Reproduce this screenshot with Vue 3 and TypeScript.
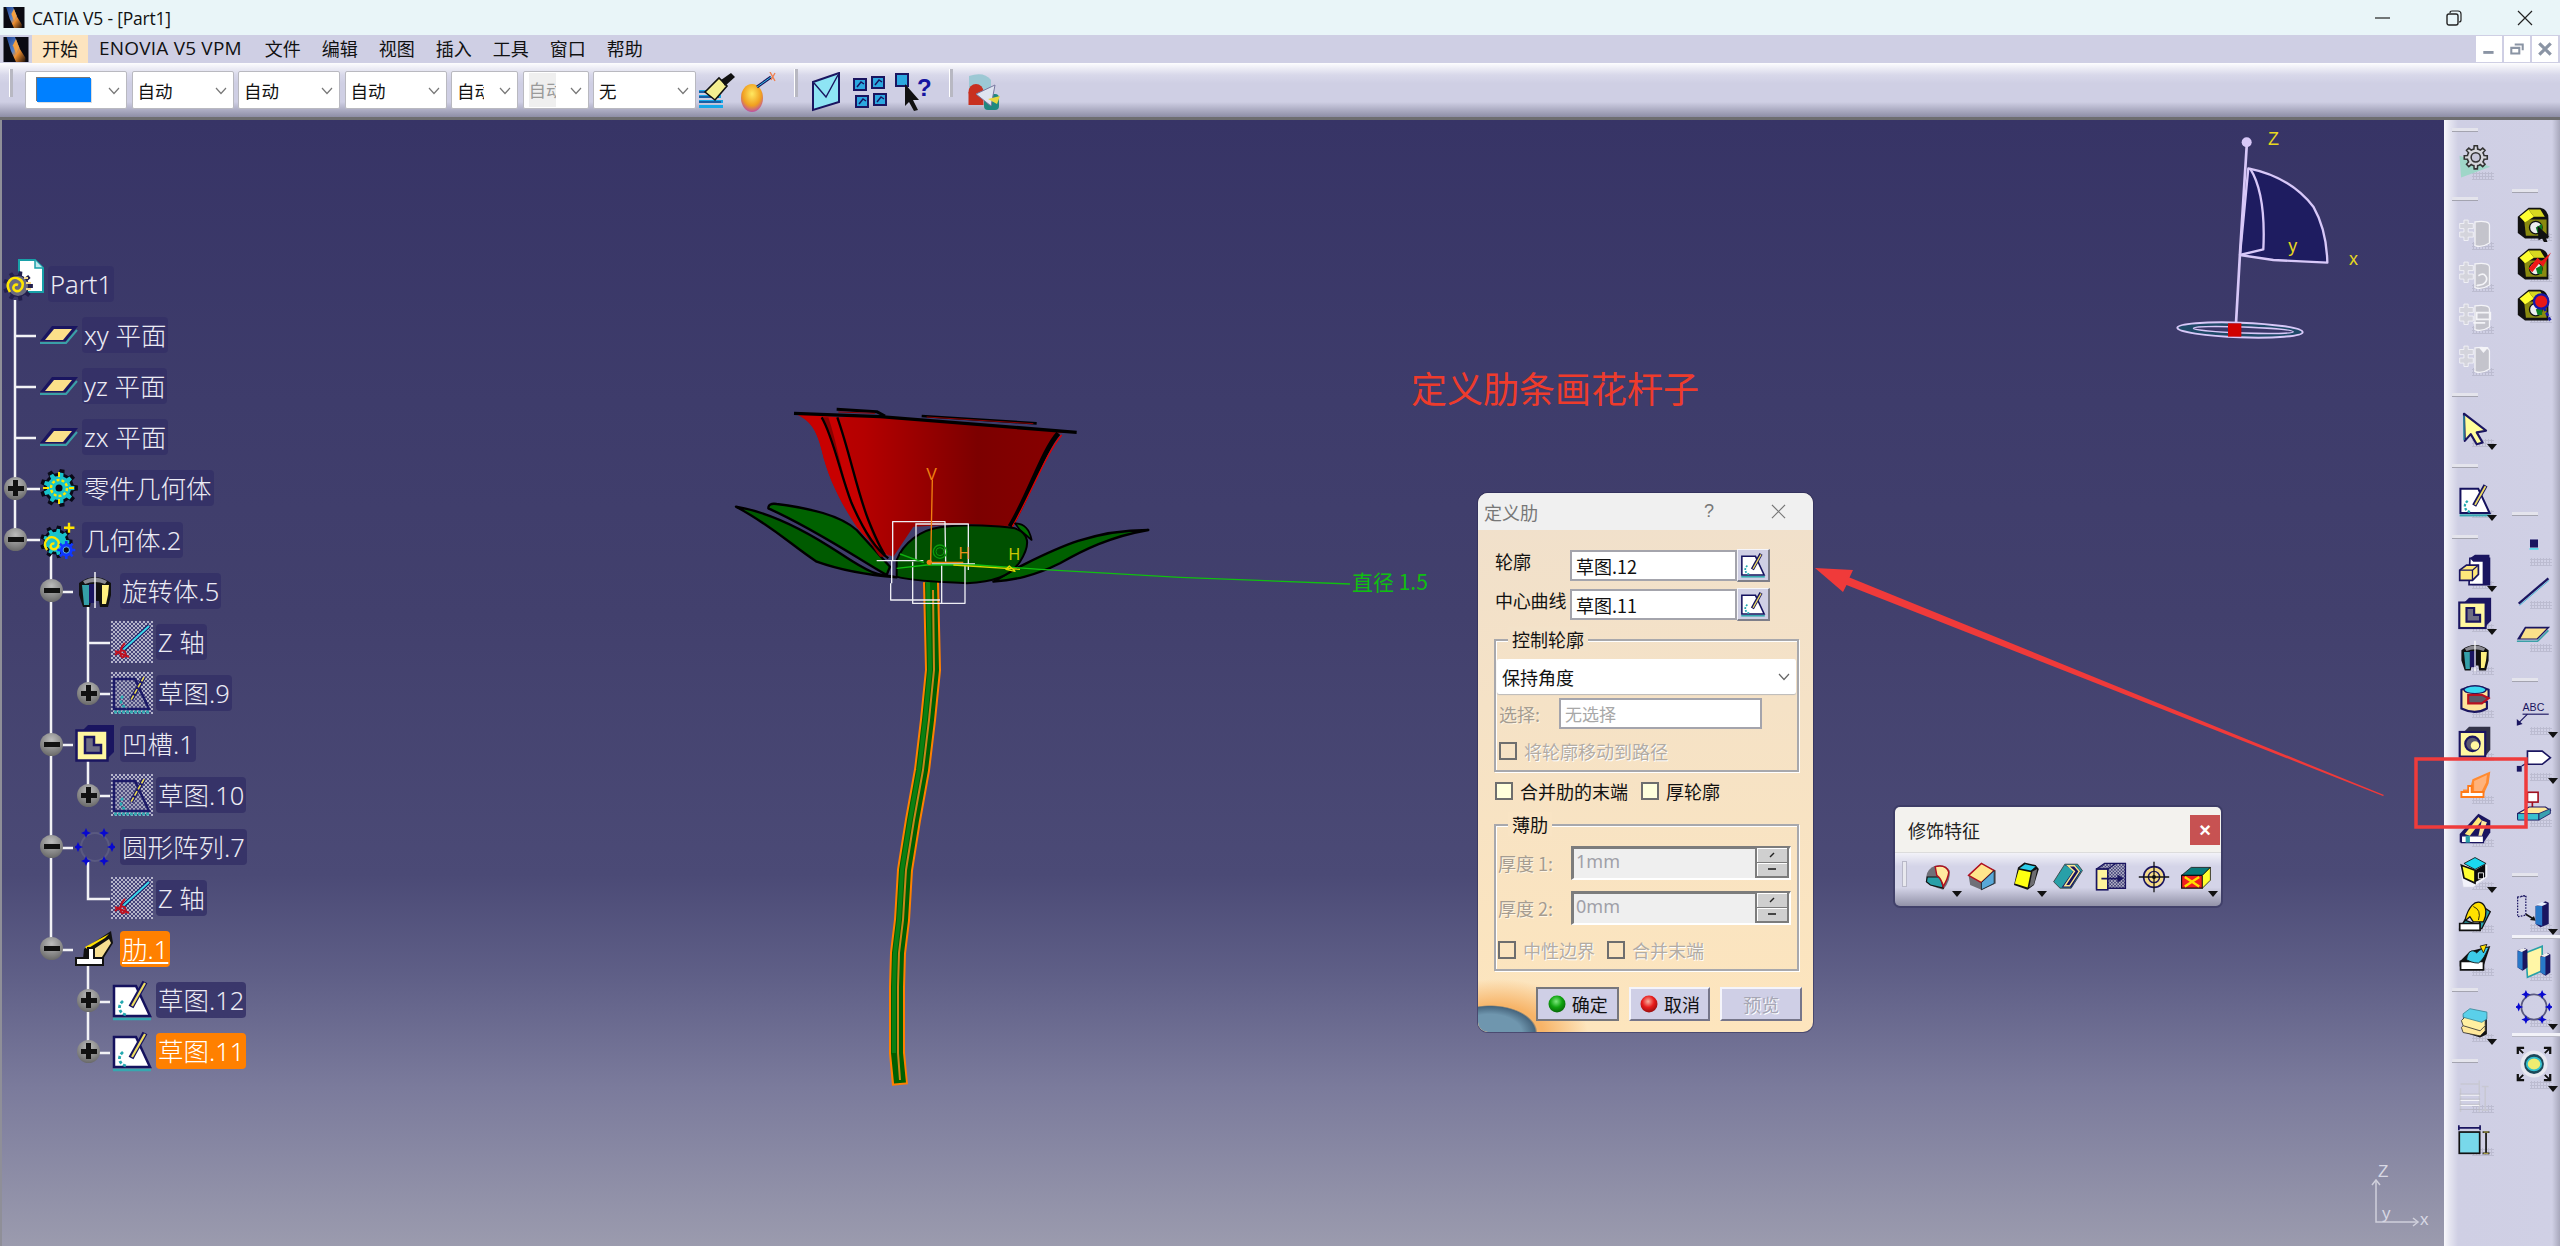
<script setup lang="ts">
interface TreeNode { lv: number; icon: string; label: string; exp?: string; sel?: boolean }
interface Tool { icon: string; more?: boolean }
interface Group { mt: number; pitch: number; handle?: string; tools: Tool[] }

const menus = ['开始', 'ENOVIA V5 VPM', '文件', '编辑', '视图', '插入', '工具', '窗口', '帮助']

const combos = [
  { w: 102, color: true },
  { w: 102, text: '自动' },
  { w: 102, text: '自动' },
  { w: 102, text: '自动' },
  { w: 67, text: '自动', clip: true },
  { w: 66, text: '自动', clip: true, off: true },
  { w: 103, text: '无' }
]

const tree: TreeNode[] = [
  { lv: -1, icon: 'part', label: 'Part1' },
  { lv: 0, icon: 'plane', label: 'xy 平面' },
  { lv: 0, icon: 'plane', label: 'yz 平面' },
  { lv: 0, icon: 'plane', label: 'zx 平面' },
  { lv: 0, icon: 'body', label: '零件几何体', exp: 'plus' },
  { lv: 0, icon: 'geom', label: '几何体.2', exp: 'minus' },
  { lv: 1, icon: 'shaft', label: '旋转体.5', exp: 'minus' },
  { lv: 2, icon: 'zaxis', label: 'Z 轴' },
  { lv: 2, icon: 'skdot', label: '草图.9', exp: 'plus' },
  { lv: 1, icon: 'pocket', label: '凹槽.1', exp: 'minus' },
  { lv: 2, icon: 'skdot', label: '草图.10', exp: 'plus' },
  { lv: 1, icon: 'circ', label: '圆形阵列.7', exp: 'minus' },
  { lv: 2, icon: 'zaxis', label: 'Z 轴' },
  { lv: 1, icon: 'rib', label: '肋.1', exp: 'minus', sel: true },
  { lv: 2, icon: 'sketch', label: '草图.12', exp: 'plus' },
  { lv: 2, icon: 'sketch', label: '草图.11', exp: 'plus', sel: true }
]

const leftGroups: Group[] = [
  { mt: 0, pitch: 43, handle: 'first', tools: [{ icon: 'cfg' }] },
  { mt: 4, pitch: 42, tools: [{ icon: 'db1' }, { icon: 'db2' }, { icon: 'db3' }, { icon: 'db4' }] },
  { mt: 4, pitch: 43, tools: [{ icon: 'arrow', more: true }] },
  { mt: 4, pitch: 43, tools: [{ icon: 'sketch', more: true }] },
  {
    mt: 4,
    pitch: 43,
    tools: [
      { icon: 'pad', more: true },
      { icon: 'pocket', more: true },
      { icon: 'shaft' },
      { icon: 'groove' },
      { icon: 'hole' },
      { icon: 'ribo' },
      { icon: 'slot' },
      { icon: 'solid', more: true },
      { icon: 'loft' },
      { icon: 'rloft' }
    ]
  },
  { mt: -1, pitch: 43, tools: [{ icon: 'thick', more: true }] },
  { mt: 4, pitch: 43, tools: [{ icon: 'dimg' }, { icon: 'dim' }] }
]

const rightGroups: Group[] = [
  { mt: 59, pitch: 41, tools: [{ icon: 'ol1' }, { icon: 'ol2' }, { icon: 'ol3' }] },
  { mt: 176, pitch: 43, tools: [{ icon: 'point' }, { icon: 'line' }, { icon: 'planet' }] },
  { mt: 13, pitch: 46, tools: [{ icon: 'abc', more: true }, { icon: 'flag', more: true }, { icon: 'stamp' }] },
  { mt: 33, pitch: 48, tools: [{ icon: 'move', more: true }] },
  { mt: 0, pitch: 46, handle: 'rule', tools: [{ icon: 'mirror' }, { icon: 'circ', more: true }] },
  { mt: 3, pitch: 56, handle: 'rule', tools: [{ icon: 'fit', more: true }] }
]

const dressUp: Tool[] = [
  { icon: 'f1', more: true },
  { icon: 'f2' },
  { icon: 'f3', more: true },
  { icon: 'f4' },
  { icon: 'f5' },
  { icon: 'f6' },
  { icon: 'f7', more: true }
]

// toothed wheel used by the body and settings icons
function gear(cx: number, cy: number, r1: number, r2: number, n: number): string {
  const pts: string[] = []
  const step = (Math.PI * 2) / n
  for (let i = 0; i < n; i++) {
    const a = i * step
    const corners: [number, number][] = [
      [r2, a - step * 0.5],
      [r2, a - step * 0.28],
      [r1, a - step * 0.18],
      [r1, a + step * 0.18],
      [r2, a + step * 0.28]
    ]
    for (const [r, t] of corners) {
      pts.push(`${(cx + r * Math.cos(t)).toFixed(1)} ${(cy + r * Math.sin(t)).toFixed(1)}`)
    }
  }
  return 'M' + pts.join('L') + 'Z'
}
</script>

<template>
  <div class="app">
    <svg class="sprite" aria-hidden="true">
      <defs>
        <pattern id="dots" width="4" height="4" patternUnits="userSpaceOnUse">
          <rect width="4" height="4" fill="#46447a" />
          <rect width="2" height="2" fill="#b4b4c8" />
          <rect x="2" y="2" width="2" height="2" fill="#b4b4c8" />
        </pattern>
        <pattern id="hatch" width="2" height="2" patternUnits="userSpaceOnUse">
          <rect width="2" height="2" fill="#1c1a5c" />
          <rect width="1" height="1" fill="#23216a" />
        </pattern>
        <linearGradient id="redPetal" x1="0" x2="1" y1="0" y2="0">
          <stop offset="0" stop-color="#c40000" />
          <stop offset=".25" stop-color="#b40000" />
          <stop offset=".65" stop-color="#7c0000" />
          <stop offset="1" stop-color="#8a0000" />
        </linearGradient>
        <radialGradient id="ballG" cx=".45" cy=".35" r=".7">
          <stop offset="0" stop-color="#7de87d" />
          <stop offset=".5" stop-color="#0fa30f" />
          <stop offset="1" stop-color="#075c07" />
        </radialGradient>
        <radialGradient id="ballR" cx=".45" cy=".35" r=".7">
          <stop offset="0" stop-color="#f7b0a0" />
          <stop offset=".5" stop-color="#e81c1c" />
          <stop offset="1" stop-color="#8c0c0c" />
        </radialGradient>
        <radialGradient id="ballY" cx=".5" cy=".35" r=".7">
          <stop offset="0" stop-color="#ffe860" />
          <stop offset=".6" stop-color="#f0a020" />
          <stop offset="1" stop-color="#b040c0" />
        </radialGradient>
        <linearGradient id="logoG" x1="0" x2="1" y1="0" y2="1">
          <stop offset="0" stop-color="#1a3f90" />
          <stop offset=".45" stop-color="#5c86c8" />
          <stop offset=".62" stop-color="#f09030" />
          <stop offset="1" stop-color="#201008" />
        </linearGradient>
      </defs>

      <symbol id="logo" viewBox="0 0 24 24">
        <rect width="24" height="24" fill="#0a0a12" />
        <path d="M3 0h8l5 12 5 8v4h-9L7 13z" fill="url(#logoG)" />
        <path d="M12 2l3 8-3 6-3-8z" fill="#f4a040" />
      </symbol>

      <symbol id="plane" viewBox="0 0 40 40">
        <path d="M13 11H39L27 26H1z" fill="#1a1560" />
        <path d="M15 14H33L24 25H6z" fill="#fbe08a" />
        <path d="M1 28H27L38 15" fill="none" stroke="#3aa0a8" stroke-width="2" />
      </symbol>

      <symbol id="part" viewBox="0 0 44 44">
        <path d="M17 1H33L41 9V33H17z" fill="#fff" stroke="#18a0a8" stroke-width="2" />
        <path d="M33 1V9H41" fill="#bfe8ec" stroke="#18a0a8" stroke-width="1.500" />
        <path :d="gear(16, 27, 15, 11, 9)" fill="#23204e" />
        <circle cx="16" cy="27" r="10" fill="#6a6a80" />
        <path d="M8 33C2 24 10 16 17 20 24 24 20 33 14 32 9 30 12 24 16 26" fill="none" stroke="#ffe600" stroke-width="2.600" />
        <path d="M22 19h4M24 24h5M24 30h5" stroke="#f7d98a" stroke-width="2" />
      </symbol>

      <symbol id="body" viewBox="0 0 40 40">
        <path :d="gear(20, 20, 19, 15, 9)" fill="#0a0a18" />
        <path :d="gear(20, 20, 15.500, 12, 9)" fill="#18c4cc" />
        <circle cx="20" cy="20" r="8" fill="none" stroke="#ffe600" stroke-width="2.500" stroke-dasharray="3 2" />
        <circle cx="20" cy="20" r="3.500" fill="#0a0a18" />
        <path d="M4 20h6M30 20h5M20 4v5M20 31v5" stroke="#ffe600" stroke-width="2" />
      </symbol>

      <symbol id="geom" viewBox="0 0 44 44">
        <path :d="gear(19, 24, 18, 14, 9)" fill="#0a0a18" />
        <path :d="gear(19, 24, 14.500, 11, 9)" fill="#18c4cc" />
        <path d="M9 33C3 25 10 16 18 20 25 24 21 33 15 32 11 30 13 25 17 26" fill="none" stroke="#ffe600" stroke-width="2.600" />
        <path d="M33 3v11M27.500 8.500H39" stroke="#ffe600" stroke-width="2.600" />
        <path :d="gear(30, 33, 10, 7, 8)" fill="#1038ff" />
        <circle cx="30" cy="33" r="3.500" fill="#0a0a18" stroke="#60c0ff" />
      </symbol>

      <symbol id="shaft" viewBox="0 0 40 40">
        <path d="M4 12Q20 0 36 12L36 24 33 36H25L24 30H16L15 36H8L4 24z" fill="#111" />
        <path d="M8 10Q20 3 32 10L30 13Q20 9 10 13z" fill="#8a8a92" />
        <path d="M7 14H14V34H9z" fill="#35a0a8" />
        <path d="M14 13H21V32H14z" fill="#1a1560" />
        <path d="M27 14H34L33 24 31 33H27z" fill="#fff080" />
        <path d="M20 1V37" stroke="#fff" stroke-width="1.400" fill="none" />
      </symbol>

      <symbol id="zaxis" viewBox="0 0 42 42">
        <rect width="42" height="42" fill="url(#dots)" />
        <path d="M38 5L12 29" stroke="#1a1560" stroke-width="4" />
        <path d="M38 5L12 29" stroke="#3cd8ea" stroke-width="2" />
        <path d="M4 34C12 26 16 30 14 35 10 40 6 30 14 22M4 30L18 36" fill="none" stroke="#c01020" stroke-width="2" />
      </symbol>

      <symbol id="skdot" viewBox="0 0 42 42">
        <rect width="42" height="42" fill="url(#dots)" />
        <path d="M3 7H24L38 37H3z" fill="#6e6e98" fill-opacity=".25" stroke="#1c1a68" stroke-width="2.500" />
        <path d="M12 24C8 28 10 34 16 36" fill="none" stroke="#23a8b0" stroke-width="2.500" stroke-dasharray="3 2" />
        <path d="M33 5L20 28" stroke="#1c1a68" stroke-width="4" />
        <path d="M33 5L20 28" stroke="#e8d850" stroke-width="1.600" stroke-dasharray="5 2" />
        <path d="M3 40H38" stroke="#36a8b0" stroke-width="3" stroke-dasharray="3 1" />
      </symbol>

      <symbol id="sketch" viewBox="0 0 42 42">
        <path d="M3 7H25L39 37H3z" fill="#fff" stroke="#15125e" stroke-width="2.500" />
        <path d="M12 22C6 27 8 34 15 36" fill="none" stroke="#23a8b0" stroke-width="2.800" stroke-dasharray="3 2" />
        <path d="M34 3L20 28" stroke="#15125e" stroke-width="5.500" />
        <path d="M34 4L21 27" stroke="#eedc60" stroke-width="2.200" />
        <path d="M2 40H40" stroke="#36a8b0" stroke-width="2.600" />
      </symbol>

      <symbol id="pocket" viewBox="0 0 40 40">
        <path d="M8 6L13 1H39V28L33 34z" fill="#1a1560" />
        <rect x="1.500" y="6.500" width="31" height="30" fill="#fff7a0" stroke="#1a1560" stroke-width="2.500" />
        <path d="M10 13H19V21H26V29H10z" fill="#6e6e84" stroke="#1a1560" stroke-width="2.500" />
      </symbol>

      <symbol id="circ" viewBox="0 0 40 40">
        <g fill="none" stroke="#5a5a80" stroke-width="2"><circle cx="20" cy="20" r="14" /></g>
        <g fill="#0808d0">
          <path v-for="(c, i) in [[11, 6], [29, 6], [37, 20], [29, 34], [11, 34], [3, 20]]" :key="i" :d="`M${c[0]} ${c[1] - 5}l1.500 3.500 3.500 1.500-3.500 1.500-1.500 3.500-1.500-3.500-3.500-1.500 3.500-1.500z`" />
        </g>
      </symbol>

      <symbol id="rib" viewBox="0 0 40 40">
        <path d="M9 20L36 2 38 14 28 30H8z" fill="#111" />
        <path d="M10 18L34 5 30 9 12 20z" fill="#ffe000" />
        <path d="M16 22L34 10 36 14 27 28H18z" fill="#f8df90" />
        <path d="M13 19H19V29H28V36H1V29H13z" fill="#fff" stroke="#111" stroke-width="2" />
      </symbol>

      <symbol id="ribo" viewBox="0 0 40 40">
        <path d="M17 12L38 3 36 17 30 30H6V24H14z" fill="#ff8a30" />
        <path d="M19 14L34 7 33 16 28 26H19z" fill="#ffb27a" />
        <path d="M16 20V27H30V33H4V27H12V20z" fill="#fff" stroke="#ff7a18" stroke-width="2.200" />
      </symbol>

      <symbol id="cfg" viewBox="0 0 44 44">
        <path d="M2 14L42 28 4 42z" fill="#9fd6c8" />
        <path :d="gear(23, 16, 15, 11, 8)" fill="#d6d6dc" stroke="#333" stroke-width="2" />
        <circle cx="23" cy="16" r="6" fill="#c6c6d8" stroke="#333" stroke-width="2" />
      </symbol>

      <g id="dbbase">
        <path d="M20 8Q37 6 37 12V33Q28 39 20 36z" fill="#c4c4cc" stroke="#f4f4f8" stroke-width="1.500" />
        <path d="M2 10h5V6h5v4h6v6h-6v4h6v6h-6v4h-5v-4H2v-6h5v-4H2z" fill="#d4d4dc" stroke="#f4f4f8" />
      </g>
      <symbol id="db1" viewBox="0 0 40 40"><use href="#dbbase" /></symbol>
      <symbol id="db2" viewBox="0 0 40 40"><use href="#dbbase" /><path d="M24 22c8-5 12 3 8 8s-8 2-10 4" fill="none" stroke="#f4f4f8" stroke-width="2" /></symbol>
      <symbol id="db3" viewBox="0 0 40 40"><use href="#dbbase" /><path d="M22 16h16v8H22zM18 28h14" fill="none" stroke="#f4f4f8" stroke-width="2" /></symbol>
      <symbol id="db4" viewBox="0 0 40 40"><use href="#dbbase" /><path d="M24 7h12l-6 7z" fill="#f4f4f8" /></symbol>

      <symbol id="arrow" viewBox="0 0 40 40">
        <path d="M7 2L33 22 22 24 29 36 22 38 15 26 8 34z" fill="#ffff9a" stroke="#1a1560" stroke-width="2.500" stroke-linejoin="round" />
        <path d="M7 4V33" stroke="#38a8b0" stroke-width="1.500" />
      </symbol>

      <symbol id="pad" viewBox="0 0 40 40">
        <path d="M14 5H37V36H13z" fill="#fff" stroke="#1a1560" stroke-width="2" />
        <path d="M14 5L20 1H37V36L29 36V9H18z" fill="#1a1560" />
        <path d="M2 19L10 13H24V24L17 31H2z" fill="#ffe97a" stroke="#1a1560" stroke-width="2" />
        <path d="M2 19H17V31M17 19L24 13" fill="none" stroke="#1a1560" stroke-width="1.500" />
      </symbol>

      <symbol id="groove" viewBox="0 0 40 40">
        <path d="M4 8Q20 0 36 8V17H26L22 22H34V30Q20 38 4 30z" fill="#ffe49a" stroke="#1a1560" stroke-width="2.500" />
        <ellipse cx="20" cy="8" rx="13" ry="4.500" fill="#3ad8f0" stroke="#1a1560" stroke-width="1.500" />
        <path d="M12 14H28L36 18 28 24H12z" fill="#5a5a68" stroke="#b81020" stroke-width="2.500" />
      </symbol>

      <symbol id="hole" viewBox="0 0 40 40">
        <path d="M8 6L13 1H38V28L32 36H4z" fill="#333348" />
        <rect x="2" y="7" width="30" height="29" fill="#fff7a0" stroke="#1a1560" stroke-width="2.500" />
        <circle cx="17" cy="21" r="8.500" fill="#5a5a70" stroke="#1a1560" stroke-width="2.500" />
        <circle cx="20" cy="23" r="5" fill="#fff7a0" />
      </symbol>

      <symbol id="slot" viewBox="0 0 40 40">
        <path d="M2 26L24 2 38 10V24L30 36H2z" fill="#1a1560" />
        <path d="M4 28H30V36H4z" fill="#fff" stroke="#1a1560" stroke-width="1.500" />
        <path d="M8 26L24 6 28 10 14 28z" fill="#ffe97a" />
        <path d="M28 10L34 12 28 28H24z" fill="#f8e8a0" />
        <path d="M9 28H14V36H9z" fill="#28a0a8" />
      </symbol>

      <symbol id="solid" viewBox="0 0 40 40">
        <path d="M2 14L20 3 35 12V26L18 38H6z" fill="#f2f2fa" stroke="#d0d0e0" />
        <path d="M20 3L33 10 20 17 7 10z" fill="#1ad8f0" stroke="#111" />
        <path d="M4 12L20 18V33L7 27z" fill="#ffff30" stroke="#111" stroke-width="2" />
        <path d="M20 18L32 11V26L20 32z" fill="#0a0a0a" />
        <path d="M24 21h6v7h-6z" fill="none" stroke="#fff" />
      </symbol>

      <symbol id="loft" viewBox="0 0 40 40">
        <path d="M2 36H28L38 16 32 12 24 32 8 26z" fill="#28a0a8" stroke="#111" stroke-width="1.500" />
        <path d="M2 38V30H26V38z" fill="#fff" stroke="#111" stroke-width="2" />
        <path d="M8 27C12 10 20 2 28 6 34 10 34 20 30 28L18 28 14 22z" fill="#ffe000" stroke="#111" stroke-width="1.500" />
        <path d="M18 10Q28 14 24 26" fill="none" stroke="#111" />
      </symbol>

      <symbol id="rloft" viewBox="0 0 40 40">
        <path d="M2 24L14 12 38 6 30 30H2z" fill="#111" />
        <path d="M3 34V24H30V34z" fill="#fff" stroke="#111" stroke-width="2" />
        <path d="M10 22C12 10 18 10 22 14 26 10 32 6 36 8 32 16 30 22 24 26 18 26 14 24 10 22z" fill="#3ccbe8" stroke="#111" />
        <path d="M26 6L34 4 30 14z" fill="#ffe000" stroke="#111" />
      </symbol>

      <symbol id="thick" viewBox="0 0 40 40">
        <path d="M6 10L14 4 30 6 34 12V32L26 36 8 30z" fill="#111" />
        <path d="M4 24L10 18 28 24 32 20V28L26 34 6 30z" fill="#ffe89a" stroke="#333" />
        <path d="M4 16L10 10 28 16 32 12V22L26 28 6 22z" fill="#fff0a0" stroke="#333" />
        <path d="M6 8L14 2 34 6V14L28 18 6 12z" fill="#5ad0ea" stroke="#3a8898" />
      </symbol>

      <symbol id="dimg" viewBox="0 0 40 40">
        <path d="M3 12V40M25 3V40M3 7H25M32 10V38M28 10H36M28 38H36" fill="none" stroke="#c8c8d2" stroke-width="1.800" />
        <path d="M3 20H25M3 26H25M3 32H25" stroke="#f4f4f8" stroke-width="2" />
        <path d="M2 19H26M2 25H26M2 31H26M2 37H26" stroke="#b8b8c4" />
      </symbol>

      <symbol id="dim" viewBox="0 0 40 40">
        <rect x="1.500" y="13" width="24" height="25" fill="#78d8ea" stroke="#111" stroke-width="2" />
        <path d="M1 8H26M1 5V11M26 5V11" fill="none" stroke="#1a1560" stroke-width="2" />
        <path d="M33 13V38M29 13H37M29 38H37" fill="none" stroke="#111" stroke-width="2" />
        <path d="M30 13H36M30 38H36" stroke="#f0e060" />
      </symbol>

      <g id="olbase">
        <path d="M2 12L14 2H27Q36 4 36 14V36H10L2 30z" fill="#111" />
        <path d="M9 15H34V33H11z" fill="#8a8a10" />
        <path d="M4 12L14 4 20 12 10 18z" fill="#ffff30" />
        <path d="M14 4H27L32 12H20z" fill="#d8d820" />
        <circle cx="22" cy="24" r="7" fill="#eee" stroke="#111" stroke-width="1.500" />
        <path d="M22 24L29 20V30H24z" fill="#0c7c20" />
      </g>
      <symbol id="ol1" viewBox="0 0 40 40"><use href="#olbase" /><path d="M24 22L37 34 33 35 35 40 31 40 29 36 25 38z" fill="#111" /></symbol>
      <symbol id="ol2" viewBox="0 0 40 40"><use href="#olbase" /><path d="M14 24L24 12 28 16 39 6 30 22 26 18 18 28z" fill="#f01818" /></symbol>
      <symbol id="ol3" viewBox="0 0 40 40"><use href="#olbase" /><ellipse cx="28" cy="15" rx="8" ry="8" fill="#e81818" stroke="#1818a8" stroke-width="2.500" /><path d="M31 22L38 36" stroke="#1818a8" stroke-width="3" stroke-dasharray="4 2" /></symbol>

      <symbol id="point" viewBox="0 0 40 40">
        <rect x="15" y="10" width="10" height="10" fill="#1a1560" stroke="#d8d8f0" />
        <path d="M15 21H25" stroke="#3cd8ea" stroke-width="1.600" />
      </symbol>
      <symbol id="line" viewBox="0 0 40 40">
        <path d="M3 34L36 6" stroke="#1a1560" stroke-width="2.500" />
        <path d="M4 36L37 8" stroke="#3cb8d8" stroke-width="1" />
      </symbol>
      <symbol id="planet" viewBox="0 0 40 40">
        <path d="M10 12H38L24 26H1z" fill="#1a1560" />
        <path d="M11 14H34L23 25H5z" fill="#fbe08a" />
        <path d="M1 28H24L36 16" fill="none" stroke="#3aa0a8" stroke-width="1.800" />
      </symbol>
      <symbol id="abc" viewBox="0 0 44 40">
        <text x="8" y="15" font-family="Liberation Sans, sans-serif" font-size="13" fill="#1a1560">ABC</text>
        <path d="M8 19H40" stroke="#1a1560" stroke-width="1.400" />
        <path d="M14 19L3 30" stroke="#1a1560" stroke-width="1.400" />
        <path d="M1 33V25L8 31z" fill="#1a1560" />
      </symbol>
      <symbol id="flag" viewBox="0 0 44 40">
        <path d="M14 8H32L42 16 32 24H14z" fill="#fff" stroke="#1a1560" stroke-width="2" />
        <rect x="1" y="26" width="6" height="7" fill="#1a1560" />
        <path d="M7 26L14 22" stroke="#1a1560" stroke-width="1.500" />
      </symbol>
      <symbol id="stamp" viewBox="0 0 44 40">
        <rect x="14" y="2" width="13" height="12" fill="#fff" stroke="#a01020" stroke-width="2" />
        <path d="M20 14V22M12 26L20 20 28 26z" fill="#c00010" stroke="#a01020" stroke-width="2" />
        <path d="M2 28L16 20H36L42 24 28 34H2z" fill="#ffe89a" stroke="#1a1560" stroke-width="1.500" />
        <path d="M2 28H28V36H2z" fill="#38c0d0" stroke="#1a1560" />
        <path d="M28 28L42 22V28L28 36z" fill="#38a0b0" stroke="#1a1560" />
      </symbol>
      <symbol id="move" viewBox="0 0 44 40">
        <path d="M2 3L12 1V25L2 27z" fill="none" stroke="#1a1560" stroke-width="1.500" stroke-dasharray="2 1.500" />
        <path d="M5 3Q10 0 13 3" stroke="#1a1560" fill="none" />
        <path d="M12 24L22 30" stroke="#111" stroke-width="2" />
        <path d="M24 32L17 31 22 26z" fill="#111" />
        <path d="M28 12L36 8 40 10V36L30 40 24 36V14z" fill="#1a1560" />
        <path d="M24 14H32V38L24 36z" fill="#2878c8" />
        <path d="M24 13L32 9 38 11 32 14z" fill="#e8f0ff" />
      </symbol>
      <symbol id="mirror" viewBox="0 0 44 40">
        <path d="M12 10L32 2V32L14 40z" fill="#fff6a6" stroke="#28a0a8" stroke-width="2" />
        <path d="M2 7L10 4 14 6V28L8 32 2 28z" fill="#1a1560" />
        <path d="M2 8H8V31L2 28z" fill="#2878c8" />
        <path d="M2 7L9 4 13 6 7 9z" fill="#eee" />
        <path d="M30 14L38 10 42 12V34L36 38 30 34z" fill="#1a1560" />
        <path d="M30 15H36V37L30 34z" fill="#2878c8" />
        <path d="M30 14L37 10 41 12 35 15z" fill="#eee" />
      </symbol>
      <symbol id="fit" viewBox="0 0 40 40">
        <circle cx="20" cy="20" r="15" fill="#e8e8f0" />
        <circle cx="20" cy="20" r="11" fill="#1c4858" />
        <ellipse cx="20" cy="20" rx="8" ry="7" fill="#f0ec70" stroke="#30c0d0" stroke-width="2" />
        <path d="M2 9V2H9M31 2H38V9M38 31V38H31M9 38H2V31" fill="none" stroke="#111" stroke-width="2.500" />
        <path d="M2 2L8 8M38 2L32 8M38 38L32 32M2 38L8 32" stroke="#111" stroke-width="2" />
      </symbol>

      <symbol id="f1" viewBox="0 0 40 40">
        <path d="M3 19Q4 10 14 6 26 3 32 12 34 24 24 36 8 32 3 26z" fill="#707078" />
        <path d="M4 20H18Q22 22 24 34L8 30 3 26z" fill="#28a0a8" stroke="#111" stroke-width="1.500" />
        <path d="M14 7Q28 4 31 14 30 22 24 32 22 22 16 18z" fill="#ffe9a0" stroke="#b01020" stroke-width="1.800" />
      </symbol>
      <symbol id="f2" viewBox="0 0 40 40">
        <path d="M2 18L18 3 36 12V28L18 36 4 30z" fill="#707078" />
        <path d="M2 18L18 3 34 12 18 27z" fill="#ffe58c" stroke="#b01020" stroke-width="1.800" />
        <path d="M18 27L34 12V28L18 36z" fill="#58a8d8" stroke="#111" />
      </symbol>
      <symbol id="f3" viewBox="0 0 40 40">
        <path d="M10 8L18 2 32 5 36 10 30 30 22 36 5 30z" fill="#111" />
        <path d="M12 9L19 4 32 7 26 12z" fill="#2ccce8" />
        <path d="M11 11L26 14 22 33 6 28z" fill="#ffff10" />
        <path d="M28 13L34 10 30 29 24 33z" fill="#6c6c70" />
      </symbol>
      <symbol id="f4" viewBox="0 0 40 40">
        <path d="M2 26L16 4H32L38 12 24 34H10z" fill="#28a0a8" stroke="#333" />
        <path d="M16 5L30 6 36 13 24 33 12 33 27 12z" fill="#1a1560" />
        <path d="M20 6H28L34 13 22 31H16L28 13z" fill="#1a1560" stroke="#f8e890" stroke-width="1.800" />
      </symbol>
      <symbol id="f5" viewBox="0 0 40 40">
        <path d="M2 10L12 3H38V34H2z" fill="url(#dots)" stroke="#1a1560" stroke-width="1.800" />
        <rect x="2" y="10" width="14" height="26" fill="#fff39c" stroke="#1a1560" stroke-width="2" />
        <path d="M8 22H30" stroke="#1a1560" stroke-width="2" />
        <path d="M36 22L28 17V27z" fill="#1a1560" />
        <path d="M2 10H16L26 3" fill="none" stroke="#1a1560" stroke-width="1.500" />
      </symbol>
      <symbol id="f6" viewBox="0 0 40 40">
        <circle cx="20" cy="20" r="13" fill="#f6dc88" stroke="#1a1560" stroke-width="2" />
        <circle cx="20" cy="20" r="7" fill="none" stroke="#1a1560" stroke-width="1.800" />
        <path d="M20 1V39M1 20H39" stroke="#111" stroke-width="1.600" />
        <circle cx="20" cy="20" r="2.500" fill="#111" />
      </symbol>
      <symbol id="f7" viewBox="0 0 40 40">
        <path d="M2 18L14 8H38L28 18z" fill="#0a7a7a" stroke="#111" />
        <path d="M2 18H28V34H2z" fill="#f02020" stroke="#111" stroke-width="1.500" />
        <path d="M6 20L24 32M24 20L6 32" stroke="#ffe000" stroke-width="3" />
        <path d="M28 18L38 8V24L28 34z" fill="#ffff30" stroke="#111" />
      </symbol>

      <symbol id="brush" viewBox="0 0 40 40">
        <path d="M2 18H24V21H2zM2 23H24V26H2zM2 28H26V31H2zM2 33H26V36H2z" fill="#18a8e8" />
        <path d="M2 20H22M2 25H22M2 30H24" stroke="#1a1560" />
        <path d="M8 20L22 6 30 14 18 28z" fill="#f4ee90" stroke="#111" stroke-width="1.600" />
        <path d="M24 8L34 1 38 5 28 14z" fill="#111" />
      </symbol>
      <symbol id="sphere" viewBox="0 0 40 40">
        <ellipse cx="15" cy="26" rx="11" ry="14" fill="url(#ballY)" />
        <path d="M20 15L34 5" stroke="#1a1560" stroke-width="3" />
        <path d="M20 15L34 5" stroke="#30c8e8" stroke-width="1" />
        <path d="M33 0L38 9M38 1L34 8" stroke="#f08050" stroke-width="1.400" />
      </symbol>
      <symbol id="envelope" viewBox="0 0 34 40">
        <path d="M4 10L30 1V30L4 38z" fill="#8ee4f4" stroke="#1a1560" stroke-width="2" />
        <path d="M5 11L17 25 29 3" fill="none" stroke="#1a1560" stroke-width="1.400" />
      </symbol>
      <symbol id="quad" viewBox="0 0 40 40">
        <g v-for="(p, i) in [[5, 7], [23, 5], [7, 24], [25, 22]]" :key="i" :transform="`translate(${p[0]} ${p[1]})`">
          <rect width="12" height="11" fill="#2ca8e0" stroke="#1a1560" stroke-width="2" />
          <path d="M3 8L7 3 10 5" fill="none" stroke="#1a1560" stroke-width="1.500" />
        </g>
      </symbol>
      <symbol id="helpq" viewBox="0 0 40 40">
        <rect x="3" y="2" width="12" height="12" fill="#2ca8e0" stroke="#1a1560" stroke-width="2" />
        <path d="M12 12L26 28 20 28 25 38 21 39 16 30 12 34z" fill="#111" />
        <text x="24" y="24" font-family="Liberation Sans, sans-serif" font-weight="700" font-size="24" fill="#1515a0">?</text>
      </symbol>
      <symbol id="appic" viewBox="0 0 40 40">
        <path d="M5 4Q20 -1 27 8V26H5z" fill="#9cc8d4" />
        <ellipse cx="12" cy="20" rx="7.500" ry="8" fill="#c83020" />
        <rect x="4.500" y="20" width="15" height="13" fill="#c83020" />
        <rect x="20" y="22" width="15" height="16" rx="4" fill="#208880" />
        <path d="M12 22L31 13 27 34z" fill="#dfe4f0" stroke="#7878a0" />
        <path d="M24 27L36 24 33 32z" fill="#e8d840" />
      </symbol>
    </svg>

    <header class="titlebar">
      <svg class="title-logo"><use href="#logo" /></svg>
      <span class="title-text">CATIA V5 - [Part1]</span>
      <div class="win-buttons">
        <svg class="win-btn" viewBox="0 0 16 16"><path d="M0 8H15" stroke="#222" stroke-width="1.200" /></svg>
        <svg class="win-btn" viewBox="0 0 16 16"><path d="M4 3Q4 1 6 1H12Q15 1 15 4V10Q15 12 13 12" fill="none" stroke="#222" stroke-width="1.200" /><rect x="1" y="4" width="11" height="11" rx="2" fill="none" stroke="#222" stroke-width="1.400" /></svg>
        <svg class="win-btn" viewBox="0 0 16 16"><path d="M1 1L15 15M15 1L1 15" stroke="#222" stroke-width="1.200" /></svg>
      </div>
    </header>

    <nav class="menubar">
      <svg class="menu-logo"><use href="#logo" /></svg>
      <span v-for="(m, i) in menus" :key="m" class="menu-item" :class="{ active: i === 0, latin: i === 1 }">{{ m }}</span>
      <div class="mdi-buttons">
        <span class="mdi-btn"><svg viewBox="0 0 14 14"><path d="M2 10H11" stroke="#8a94a4" stroke-width="2.500" /></svg></span>
        <span class="mdi-btn"><svg viewBox="0 0 14 14"><path d="M5 3H12V8M2 6H9V11H2z" fill="none" stroke="#8a94a4" stroke-width="1.800" /></svg></span>
        <span class="mdi-btn"><svg viewBox="0 0 14 14"><path d="M2 2L12 12M12 2L2 12" stroke="#8a94a4" stroke-width="2.800" /></svg></span>
      </div>
    </nav>

    <div class="toolbar">
      <i class="grip first-grip"></i>
      <div class="combos">
        <div
          v-for="(c, i) in combos"
          :key="i"
          class="combo"
          :class="{ off: c.off }"
          :style="{ width: c.w + 'px' }"
        >
          <span v-if="c.color" class="swatch"></span>
          <span v-else class="combo-text" :class="{ clip: c.clip }">{{ c.text }}</span>
          <svg class="chevron" viewBox="0 0 12 8"><path d="M1 1L6 6.500 11 1" fill="none" stroke="#777" stroke-width="1.200" /></svg>
        </div>
      </div>
      <svg class="top-icon"><use href="#brush" /></svg>
      <svg class="top-icon"><use href="#sphere" /></svg>
      <i class="grip grip-a"></i>
      <svg class="top-icon env"><use href="#envelope" /></svg>
      <svg class="top-icon"><use href="#quad" /></svg>
      <svg class="top-icon help"><use href="#helpq" /></svg>
      <i class="grip grip-b"></i>
      <svg class="top-icon app-ic"><use href="#appic" /></svg>
    </div>

    <div class="workspace">
      <main class="viewport">
        <svg class="scene" viewBox="0 120 2444 1126">
          <!-- stem -->
          <g fill="none" stroke-linejoin="round">
            <path d="M931 582L933 670 928 720 922 770 913 820 905 870 902 920 898 953 897 987 897 1053 900 1085" stroke="#ff8000" stroke-width="16" />
            <path d="M931 582L933 670 928 720 922 770 913 820 905 870 902 920 898 953 897 987 897 1053 900 1083" stroke="#006000" stroke-width="12" />
            <path d="M928 582L930 670 925 720 919 770 910 820 902 870 899 920 895 953 894 987 894 1053" stroke="#0b7f12" stroke-width="4" />
            <path d="M933 590L934 670 929 720 923 770 914 820 906 870 903 920 899 953 898 987 898 1053 900 1080" stroke="#c8861a" stroke-width="2" />
          </g>
          <g transform="translate(700 380) scale(.33333)" stroke-linejoin="round">
            <!-- back leaves -->
            <path d="M205 385Q205 368 230 372C330 385 420 405 470 450L570 560 560 585C480 540 350 450 205 385Z" fill="#006200" stroke="#000" stroke-width="7" />
            <path d="M108 380C200 395 300 440 420 520S540 580 590 592C500 585 420 570 350 545 280 500 220 440 108 380Z" fill="#005a00" stroke="#000" stroke-width="7" />
            <path d="M955 562C1060 510 1170 450 1345 450 1230 470 1150 510 1080 550 1000 590 940 600 880 605Z" fill="#006000" stroke="#000" stroke-width="7" />
            <!-- petals -->
            <path d="M282 100C330 120 350 150 365 210 385 300 430 380 470 440 510 490 550 520 580 530L640 440 800 432 930 440C985 350 1030 210 1075 160L1130 157 1075 150 540 108 420 112Z" fill="url(#redPetal)" />
            <path d="M300 106C330 120 350 150 365 210 385 300 430 380 470 440 510 490 550 520 570 530L520 480 410 112Z" fill="#c80000" />
            <path d="M368 112C405 175 425 285 460 375 495 455 530 510 560 530L540 530C500 480 460 390 440 320 420 250 405 170 385 112Z" fill="#8a0000" />
            <path d="M365 112C400 170 420 280 455 370 490 450 530 510 565 535M412 112C450 220 470 330 505 420 525 470 545 510 555 525" fill="none" stroke="#000" stroke-width="7" />
            <path d="M930 440C985 350 1030 210 1075 160" fill="none" stroke="#000" stroke-width="15" />
            <path d="M937 440C992 345 1035 225 1085 165" fill="none" stroke="#e00000" stroke-width="4" />
            <path d="M282 100L540 110 1130 157" fill="none" stroke="#000" stroke-width="10" />
            <path d="M410 88L530 95 555 108" fill="none" stroke="#000" stroke-width="9" />
            <path d="M415 96L525 100" fill="none" stroke="#8a0000" stroke-width="3" />
            <path d="M665 108L1010 130" fill="none" stroke="#000" stroke-width="8" />
            <path d="M680 111L1000 131" fill="none" stroke="#8a0000" stroke-width="3" />
            <!-- cup -->
            <path d="M945 430Q985 430 995 480L960 450Z" fill="#007000" stroke="#000" stroke-width="5" />
            <path d="M590 540C610 490 660 450 720 442 800 430 900 438 945 445 985 460 995 490 960 545 930 590 880 605 800 610 720 605 640 605 590 590Z" fill="#005000" stroke="#000" stroke-width="6" />
            <!-- profile handles -->
            <g fill="none" stroke="#eeeef4" stroke-width="4">
              <path d="M578 540V425H735L737 545" />
              <path d="M648 430V540M648 432H805V570" />
              <path d="M572 610V660H720M575 540V610" />
              <path d="M638 545V670H795V555M725 555V670" />
              <path d="M530 542H670M695 552H825" />
            </g>
            <circle cx="720" cy="515" r="20" fill="none" stroke="#0c9a0c" stroke-width="4" />
            <circle cx="720" cy="515" r="12" fill="none" stroke="#0c9a0c" stroke-width="3" />
            <path d="M600 522L672 548" stroke="#10b010" stroke-width="4" fill="none" />
            <path d="M590 565L680 555 830 555 1020 568 1440 592 1950 612" stroke="#10c010" stroke-width="4" fill="none" />
            <path d="M760 555L960 568M918 568L928 558 945 574z" stroke="#d8d800" stroke-width="4" fill="none" />
            <path d="M697 300L692 547M695 547H790" stroke="#f08010" stroke-width="4" fill="none" />
            <circle cx="688" cy="547" r="8" fill="#f08010" />
            <text x="695" y="300" class="mark" fill="#f08010" text-anchor="middle">V</text>
            <text x="793" y="538" class="mark" fill="#e89018" text-anchor="middle">H</text>
            <text x="943" y="540" class="mark" fill="#c8c800" text-anchor="middle">H</text>
          </g>
          <text x="1352" y="590" class="dia-label">直径 1.5</text>

          <!-- compass -->
          <g transform="translate(2140 120) scale(.33333)" stroke="#d8c8f8" stroke-linejoin="round">
            <circle cx="320" cy="67" r="15" fill="#d8c8f8" stroke="none" />
            <path d="M325 145Q450 170 520 260 560 330 562 428L400 420 300 405z" fill="url(#hatch)" stroke-width="7" />
            <path d="M330 145Q378 220 370 388L300 405" fill="none" stroke-width="7" />
            <path d="M320 80L300 400 288 610" fill="none" stroke-width="8" />
            <ellipse cx="300" cy="630" rx="188" ry="22" transform="rotate(2 300 630)" fill="#1f4a68" stroke-width="6" />
            <ellipse cx="310" cy="630" rx="150" ry="9" transform="rotate(2 310 630)" fill="#3a3768" stroke-width="4" />
            <rect x="264" y="610" width="40" height="40" fill="#d00000" stroke="none" />
            <g class="compass-text" stroke="none" fill="#e8d820">
              <text x="384" y="75">Z</text>
              <text x="445" y="396">y</text>
              <text x="627" y="434">x</text>
            </g>
          </g>

          <!-- little axis in the corner -->
          <g fill="none" stroke="#d0d0dc" stroke-width="1.500">
            <path d="M2376 1180V1222H2418" />
            <path d="M2372 1185L2376 1180 2380 1185M2413 1218L2418 1222 2413 1226" />
          </g>
          <g class="corner-text" fill="#d8d8e4">
            <text x="2378" y="1177">Z</text>
            <text x="2382" y="1219">y</text>
            <text x="2420" y="1225">x</text>
          </g>
        </svg>

        <div class="tree">
          <svg class="tree-lines" viewBox="0 0 320 940">
            <g transform="translate(0 -258)" fill="none" stroke="#f2f2f6" stroke-width="2.500">
              <path d="M15 300V540M15 336H36M15 387H36M15 438H36M15 489H40M15 540H40" />
              <path d="M51 550V950M51 592H73M51 745H73M51 848H73M51 950H73" />
              <path d="M88 600V694M88 643H110M88 694H110" />
              <path d="M88 760V796M88 796H110" />
              <path d="M88 860V899H110" />
              <path d="M88 960V1053M88 1002H110M88 1053H110" />
            </g>
          </svg>
          <div v-for="(n, i) in tree" :key="i" class="row" :class="'lv' + n.lv">
            <span v-if="n.exp" class="exp" :class="n.exp"></span>
            <svg class="node-ic"><use :href="'#' + n.icon" /></svg>
            <span class="node-label" :class="{ sel: n.sel, ul: n.label === '肋.1' }">{{ n.label }}</span>
          </div>
        </div>

        <div class="caption">定义肋条画花杆子</div>

        <section class="dialog">
          <div class="dlg-title">
            <span>定义肋</span>
            <svg class="dlg-x" viewBox="0 0 16 16"><path d="M1 1L15 15M15 1L1 15" stroke="#777" stroke-width="1.300" /></svg>
            <span class="dlg-q">?</span>
          </div>
          <div class="dlg-body">
            <div class="field-row">
              <label>轮廓</label>
              <span class="field">草图.12</span>
              <span class="pick"><svg><use href="#sketch" /></svg></span>
            </div>
            <div class="field-row">
              <label class="tight">中心曲线</label>
              <span class="field">草图.11</span>
              <span class="pick"><svg><use href="#sketch" /></svg></span>
            </div>

            <div class="group g-control">
              <span class="legend">控制轮廓</span>
              <div class="select">
                <span>保持角度</span>
                <svg class="chevron" viewBox="0 0 12 8"><path d="M1 1L6 6.500 11 1" fill="none" stroke="#666" stroke-width="1.200" /></svg>
              </div>
              <div class="pick-row">
                <span class="dim">选择:</span>
                <span class="field none">无选择</span>
              </div>
              <label class="check faded"><i class="box"></i>将轮廓移动到路径</label>
            </div>

            <div class="merge-row">
              <label class="check"><i class="box lit"></i>合并肋的末端</label>
              <label class="check"><i class="box lit"></i>厚轮廓</label>
            </div>

            <div class="group g-thin">
              <span class="legend">薄肋</span>
              <div v-for="r in [['厚度 1:', '1mm'], ['厚度 2:', '0mm']]" :key="r[0]" class="spin-row">
                <span class="dim">{{ r[0] }}</span>
                <div class="spin">
                  <span>{{ r[1] }}</span>
                  <div class="spin-btns">
                    <i><svg viewBox="0 0 10 8"><path d="M3 6L7 2" stroke="#222" stroke-width="1.400" /></svg></i>
                    <i><svg viewBox="0 0 10 8"><path d="M1 4H9" stroke="#222" stroke-width="1.600" /></svg></i>
                  </div>
                </div>
              </div>
              <div class="thin-checks">
                <label class="check faded"><i class="box"></i>中性边界</label>
                <label class="check faded"><i class="box"></i>合并末端</label>
              </div>
            </div>
          </div>
          <div class="dlg-foot">
            <button class="btn ok"><svg class="ball" viewBox="0 0 20 20"><circle cx="10" cy="10" r="8.500" fill="url(#ballG)" /></svg>确定</button>
            <button class="btn"><svg class="ball" viewBox="0 0 20 20"><circle cx="10" cy="10" r="8.500" fill="url(#ballR)" /></svg>取消</button>
            <button class="btn ghost">预览</button>
          </div>
        </section>

        <section class="floatbar">
          <div class="float-title">
            <span>修饰特征</span>
            <span class="float-x">×</span>
          </div>
          <div class="float-tools">
            <i class="float-grip"></i>
            <span v-for="t in dressUp" :key="t.icon" class="float-tool" :class="{ more: t.more }">
              <svg><use :href="'#' + t.icon" /></svg>
            </span>
          </div>
        </section>
      </main>

      <aside class="side">
        <div class="side-col left">
          <div
            v-for="(g, i) in leftGroups"
            :key="i"
            class="side-group"
            :style="{ marginTop: g.mt + 'px' }"
          >
            <div class="handle" :class="g.handle"><i></i></div>
            <div
              v-for="t in g.tools"
              :key="t.icon"
              class="tool"
              :class="{ more: t.more }"
              :style="{ height: g.pitch + 'px' }"
            >
              <svg><use :href="'#' + t.icon" /></svg>
            </div>
          </div>
        </div>
        <div class="side-col right">
          <div
            v-for="(g, i) in rightGroups"
            :key="i"
            class="side-group"
            :style="{ marginTop: g.mt + 'px' }"
          >
            <div class="handle" :class="g.handle"><i></i></div>
            <div
              v-for="t in g.tools"
              :key="t.icon"
              class="tool"
              :class="{ more: t.more }"
              :style="{ height: g.pitch + 'px' }"
            >
              <svg><use :href="'#' + t.icon" /></svg>
            </div>
          </div>
        </div>
      </aside>

      <!-- red annotation drawn over the window -->
      <svg class="markup" viewBox="0 120 2560 1126">
        <polygon points="1815,568 1853,570 1849.500,577.500 2384,795 2383,796 1846.500,585 1843,592" fill="#f03a3a" />
        <rect x="2416" y="759" width="110" height="68" fill="none" stroke="#ef3b3b" stroke-width="3.500" />
      </svg>
    </div>
  </div>
</template>

<style scoped>
.app {
  width: 2560px;
  height: 1246px;
  display: flex;
  flex-direction: column;
  overflow: hidden;
  font-family: "Noto Sans CJK SC", "Noto Sans", sans-serif;
  color: #111;
}
.sprite {
  position: absolute;
  width: 0;
  height: 0;
}

/* title + menu */
.titlebar {
  height: 35px;
  background: #e9f5f8;
  display: flex;
  align-items: center;
}
.title-logo {
  width: 22px;
  height: 21px;
  margin-left: 3px;
}
.title-text {
  margin-left: 7px;
  font-family: "Open Sans", sans-serif;
  font-size: 17.500px;
  letter-spacing: -0.200px;
}
.win-buttons {
  margin-left: auto;
  display: flex;
  gap: 55px;
  padding-right: 27px;
}
.win-btn {
  width: 16px;
  height: 16px;
}
.menubar {
  height: 28px;
  background: #cfcfe4;
  display: flex;
  align-items: center;
  font-size: 18px;
}
.menu-logo {
  width: 28px;
  height: 25px;
  margin: 0 2px;
}
.menu-item {
  padding: 0 10px;
  height: 28px;
  line-height: 27px;
  margin-right: 1px;
}
.menu-item.active {
  background: #fce4bf;
  margin-right: 0;
}
.menu-item.latin {
  font-family: "Open Sans", sans-serif;
  font-size: 19px;
  letter-spacing: 0.200px;
  margin-left: 1px;
  padding-right: 12px;
}
.mdi-buttons {
  margin-left: auto;
  display: flex;
  gap: 2px;
  padding-right: 2px;
}
.mdi-btn {
  width: 26px;
  height: 26px;
  background: #fff;
  display: flex;
  align-items: center;
  justify-content: center;
}
.mdi-btn svg {
  width: 16px;
  height: 16px;
}

/* top toolbar */
.toolbar {
  height: 54px;
  background: linear-gradient(#fdfdfe 0, #d8d8ea 22%, #cfcfe4 38%, #cfcfe4 72%, #8e8ea6 100%);
  border-bottom: 3px solid #6e6e70;
  box-sizing: content-box;
  display: flex;
  align-items: center;
}
.grip {
  width: 3px;
  height: 28px;
  background: #b8b8c2;
  border-left: 1px solid #fff;
  margin-top: -14px;
  flex: none;
}
.first-grip {
  margin-left: 9px;
}
.combos {
  display: flex;
  gap: 4.500px;
  margin-left: 12px;
}
.combo {
  height: 38px;
  background: #fff;
  box-sizing: border-box;
  border: 1px solid #b9b9c0;
  border-radius: 2px;
  display: flex;
  align-items: center;
  padding-left: 5px;
  position: relative;
  font-size: 17.500px;
}
.combo .chevron {
  position: absolute;
  right: 6px;
  top: 15px;
  width: 12px;
  height: 8px;
}
.combo-text.clip {
  width: 27px;
  overflow: hidden;
  white-space: nowrap;
}
.combo.off {
  background: #fff;
  color: #9a9a9a;
}
.combo.off .combo-text {
  background: #efefef;
  height: 34px;
  line-height: 34px;
}
.swatch {
  width: 54px;
  height: 24px;
  margin-left: 6px;
  background: #0080ff;
  box-shadow: -1px -1px 0 #777, 1px 1px 0 #ddd;
}
.top-icon {
  width: 40px;
  height: 40px;
  margin-top: 3px;
  flex: none;
}
.top-icon:first-of-type {
  margin-left: 1px;
}
.grip-a {
  margin-left: 17px;
}
.env {
  width: 34px;
  margin-left: 11px;
  margin-right: 6px;
}
.help {
  margin-left: 4px;
}
.grip-b {
  margin-left: 16px;
}
.app-ic {
  margin-left: 11px;
}

/* canvas */
.workspace {
  flex: 1;
  display: flex;
  position: relative;
  min-height: 0;
}
.viewport {
  width: 2444px;
  position: relative;
  overflow: hidden;
  box-sizing: border-box;
  background: linear-gradient(#373466 0, #3e3c6b 25%, #42406d 44%, #4b4a76 67%, #5f5f87 76%, #7b7b9c 86%, #9b9bae 100%);
  box-shadow: inset 2px 0 0 #8f8f98;
}
.scene {
  position: absolute;
  left: 0;
  top: 0;
  width: 2444px;
  height: 1126px;
}
.mark {
  font: 48px "Liberation Sans", sans-serif;
}
.dia-label {
  font: 21px "Noto Sans CJK SC", sans-serif;
  fill: #0fbf10;
}
.compass-text text {
  font: 54px "Liberation Sans", sans-serif;
}
.corner-text text {
  font: 17px "Liberation Sans", sans-serif;
}
.markup {
  position: absolute;
  left: 0;
  top: 0;
  width: 2560px;
  height: 1126px;
  pointer-events: none;
}

/* tree */
.tree {
  position: absolute;
  left: 0;
  top: 138px;
  width: 320px;
}
.tree-lines {
  position: absolute;
  left: 0;
  top: 0;
  width: 320px;
  height: 940px;
}
.row {
  position: relative;
  height: 51.200px;
  display: flex;
  align-items: center;
}
.node-ic {
  width: 40px;
  height: 40px;
  flex: none;
  position: relative;
}
.lv-1 .node-ic {
  width: 44px;
  height: 44px;
  margin-left: 2px;
  margin-right: 2px;
  margin-top: -5px;
}
.lv0 .node-ic {
  margin-left: 39px;
  margin-right: 3px;
}
.lv1 .node-ic {
  margin-left: 75px;
  margin-right: 5px;
}
.lv2 .node-ic {
  width: 42px;
  height: 42px;
  margin-left: 111px;
  margin-right: 3px;
}
.node-label {
  position: relative;
  background: rgba(52, 48, 102, 0.85);
  color: #ecebf4;
  border-radius: 4px;
  font-size: 25.500px;
  line-height: 36px;
  height: 36px;
  padding: 0 2px;
  white-space: nowrap;
  font-family: "Noto Sans", "Noto Sans CJK SC", sans-serif;
  font-weight: 300;
}
.node-label.sel {
  background: #ff8000;
  color: #fff;
}
.node-label.ul {
  text-decoration: underline;
  text-underline-offset: 3px;
}
.exp {
  position: absolute;
  width: 23px;
  height: 23px;
  border-radius: 50%;
  top: 14px;
  background: radial-gradient(circle at 50% 30%, #bcbcbc, #808080 60%, #555);
  z-index: 1;
}
.lv0 .exp {
  left: 4px;
}
.lv1 .exp {
  left: 40px;
}
.lv2 .exp {
  left: 77px;
}
.exp::before {
  content: "";
  position: absolute;
  left: 3.500px;
  top: 9px;
  width: 16px;
  height: 5px;
  background: #111;
}
.exp.plus::after {
  content: "";
  position: absolute;
  left: 9px;
  top: 3.500px;
  width: 5px;
  height: 16px;
  background: #111;
}

.caption {
  position: absolute;
  left: 1411px;
  top: 245px;
  font-size: 36px;
  line-height: 44px;
  color: #ee3b2c;
}

/* dialog window */
.dialog {
  position: absolute;
  left: 1478px;
  top: 373px;
  width: 335px;
  height: 539px;
  border-radius: 10px;
  overflow: hidden;
  background: linear-gradient(#f0e0cc, #fde5bd);
  box-shadow: 0 0 0 1px rgba(40, 40, 80, 0.5);
  display: flex;
  flex-direction: column;
  font-size: 18px;
}
.dlg-title {
  height: 37px;
  flex: none;
  background: #f0f0f0;
  display: flex;
  align-items: center;
  padding-left: 6px;
  color: #777;
}
.dlg-title span:first-child {
  flex: 1;
}
.dlg-q {
  order: 1;
  font-family: "Liberation Sans", sans-serif;
  width: 67px;
}
.dlg-x {
  order: 2;
  width: 15px;
  height: 15px;
  margin-right: 27px;
}
.dlg-body {
  flex: 1;
  padding: 19px 14px 0 17px;
}
.field-row {
  display: flex;
  align-items: center;
  height: 33px;
  margin-bottom: 6px;
}
.field-row label {
  width: 75px;
  flex: none;
  margin-top: -10px;
}
.field-row label.tight {
  margin-top: -9px;
  letter-spacing: -0.200px;
}
.field {
  background: #fff;
  box-sizing: border-box;
  border: 2px solid #a4a4ac;
  font-size: 18px;
  padding-left: 4px;
  display: flex;
  align-items: center;
}
.field-row .field {
  width: 167px;
  height: 31px;
}
.pick {
  width: 33px;
  height: 33px;
  box-sizing: border-box;
  background: #cfcfe4;
  border: 1px solid #f5f5fa;
  border-right: 2px solid #7e7e88;
  border-bottom: 2px solid #7e7e88;
  display: flex;
  align-items: center;
  justify-content: center;
}
.pick svg {
  width: 26px;
  height: 26px;
}
.group {
  position: relative;
  box-sizing: border-box;
  width: 305px;
  margin-left: -1px;
  border: 2px solid #a8a8ac;
  box-shadow: 1px 1px 0 #fff, inset 1px 1px 0 #fff;
}
.legend {
  position: absolute;
  left: 12px;
  top: -14px;
  padding: 0 4px;
  line-height: 24px;
  background: #f3e2c9;
}
.g-thin .legend {
  background: #f9e4c4;
}
.g-control {
  height: 133px;
  margin-top: 18px;
  padding: 18px 1px 0;
}
.select {
  height: 35px;
  background: #fff;
  border-radius: 2px;
  box-shadow: 0 1px 1px #bbb;
  display: flex;
  align-items: center;
  padding-left: 5px;
  position: relative;
}
.select .chevron {
  position: absolute;
  right: 6px;
  top: 14px;
  width: 12px;
  height: 8px;
}
.pick-row {
  display: flex;
  align-items: center;
  margin-top: 4px;
  height: 31px;
  padding-left: 2px;
}
.dim {
  color: #a59c90;
  text-shadow: 1px 1px 0 #fff6e6;
}
.pick-row .dim {
  width: 60px;
}
.field.none {
  width: 203px;
  height: 31px;
  color: #a8a8a8;
  font-size: 17px;
}
.check {
  display: inline-flex;
  align-items: center;
  gap: 7px;
  line-height: 18px;
  white-space: nowrap;
}
.box {
  width: 18px;
  height: 18px;
  box-sizing: border-box;
  border: 2px solid #6e6e6e;
  flex: none;
}
.box.lit {
  background: #ffffdc;
}
.faded {
  color: #b2aca4;
  text-shadow: 1px 1px 0 #fff;
}
.g-control .check {
  margin: 13px 0 0 2px;
}
.merge-row {
  display: flex;
  gap: 13px;
  margin-top: 10px;
  height: 18px;
}
.g-thin {
  height: 147px;
  margin-top: 24px;
  padding: 20px 2px 0;
}
.spin-row {
  display: flex;
  align-items: center;
  height: 34px;
  margin-bottom: 11px;
}
.spin-row .dim {
  width: 73px;
  flex: none;
  font-size: 18px;
}
.spin {
  width: 220px;
  height: 34px;
  box-sizing: border-box;
  background: #efefef;
  border-top: 3px solid #7c7c7c;
  border-left: 3px solid #7c7c7c;
  border-right: 2px solid #fff;
  border-bottom: 2px solid #fff;
  color: #a0a0a8;
  display: flex;
  justify-content: space-between;
  padding-left: 2px;
  line-height: 24px;
  font-family: "Noto Sans", sans-serif;
}
.spin-btns {
  width: 30px;
  margin-top: -3px;
  border: 2px solid #7c7c7c;
  display: flex;
  flex-direction: column;
  gap: 1px;
  background: #7c7c7c;
}
.spin-btns i {
  flex: 1;
  background: #cfcfcf;
  box-shadow: inset 1px 1px 0 #fff;
  display: flex;
  align-items: center;
  justify-content: center;
}
.spin-btns svg {
  width: 10px;
  height: 8px;
}
.thin-checks {
  display: flex;
  gap: 12px;
  margin-top: 16px;
}
.dlg-foot {
  height: 61px;
  flex: none;
  box-sizing: border-box;
  display: flex;
  gap: 10px;
  padding: 16px 11px 0 58px;
  background:
    radial-gradient(ellipse 58px 34px at 12px 62px, #6f96ae 0 55%, #47667e 78%, transparent 82%),
    radial-gradient(ellipse 90px 54px at 20px 62px, #f7b468 0 50%, transparent 100%);
}
.btn {
  height: 34px;
  width: 82px;
  padding: 0;
  box-sizing: border-box;
  background: #cfcfe6;
  border: 2px solid;
  border-color: #f4f4fb #76768a #76768a #f4f4fb;
  font: 18px "Noto Sans CJK SC", sans-serif;
  color: #111;
  display: flex;
  align-items: center;
  justify-content: center;
  gap: 5px;
}
.btn.ok {
  border-color: #77777c;
  width: 83px;
}
.btn.ghost {
  color: #a6a6b4;
  text-shadow: 1px 1px 0 #fff;
}
.ball {
  width: 20px;
  height: 20px;
}

/* floating toolbar */
.floatbar {
  position: absolute;
  left: 1895px;
  top: 687px;
  width: 326px;
  height: 99px;
  border-radius: 5px;
  overflow: hidden;
  box-shadow: 0 0 0 2px rgba(50, 50, 90, 0.5);
  display: flex;
  flex-direction: column;
}
.float-title {
  height: 46px;
  flex: none;
  background: #f3f2ee;
  border-bottom: 1px solid #dcdcdc;
  display: flex;
  align-items: center;
  justify-content: space-between;
  padding: 0 1px 0 13px;
  font-size: 18px;
  color: #222;
  box-sizing: border-box;
}
.float-x {
  width: 30px;
  height: 30px;
  background: #c75252;
  color: #fff;
  font: 700 20px/30px "Liberation Sans", sans-serif;
  text-align: center;
}
.float-tools {
  flex: 1;
  background: linear-gradient(#f2f2f8 0, #d4d4e8 25%, #d4d4e8 65%, #9292a8 100%);
  display: flex;
  align-items: center;
  padding-left: 7px;
}
.float-grip {
  width: 3px;
  height: 24px;
  background: #e8e8ee;
  border: 1px solid #b8b8c8;
  margin: -12px 12px 0 0;
}
.float-tool {
  width: 42.700px;
  height: 40px;
  display: flex;
  justify-content: center;
  position: relative;
  margin-top: 2px;
}
.float-tool svg {
  width: 32px;
  height: 32px;
}
.float-tool.more::after,
.tool.more::after {
  content: "";
  position: absolute;
  width: 0;
  height: 0;
  border-left: 5.500px solid transparent;
  border-right: 5.500px solid transparent;
  border-top: 6px solid #111;
}
.float-tool.more::after {
  right: 0;
  bottom: 4px;
}

/* right hand toolbar */
.side {
  flex: 1;
  display: flex;
  background: linear-gradient(90deg, #f8f8fc 0, #e4e4f0 6px, #cfcfe4 14px, #d0d0e5 108px, #a8a8bc 116px);
}
.side-col.left {
  width: 68px;
}
.side-col.right {
  width: 48px;
}
.handle {
  height: 24px;
  display: flex;
  align-items: center;
}
.handle.first {
  height: 20px;
}
.handle i {
  width: 26px;
  height: 3px;
  background: #e4e4ec;
  border-bottom: 1px solid #a4a4b0;
}
.left .handle i {
  margin-left: 8px;
}
.handle.rule {
  height: 3px;
}
.handle.rule i {
  width: 48px;
  background: #f2f2f8;
  border-bottom: 1px solid #b8b8c4;
}
.tool {
  position: relative;
  display: flex;
  align-items: center;
}
.tool::before {
  content: "";
  position: absolute;
  bottom: 3px;
  width: 22px;
  height: 8px;
  background: radial-gradient(#b4b4c8 1px, transparent 1.300px) 0 0 / 3px 3px;
  opacity: 0.7;
}
.left .tool::before {
  left: 28px;
}
.right .tool::before {
  left: 18px;
}
.left .tool svg {
  position: relative;
  width: 34px;
  height: 34px;
  margin-left: 14px;
}
.right .tool svg {
  position: relative;
  width: 36px;
  height: 36px;
  margin-left: 4px;
}
.left .tool.more::after {
  left: 43px;
  bottom: 0;
}
.right .tool.more::after {
  right: 2px;
  bottom: 0;
}
</style>

<style>
html,
body {
  margin: 0;
  overflow: hidden;
}
</style>
